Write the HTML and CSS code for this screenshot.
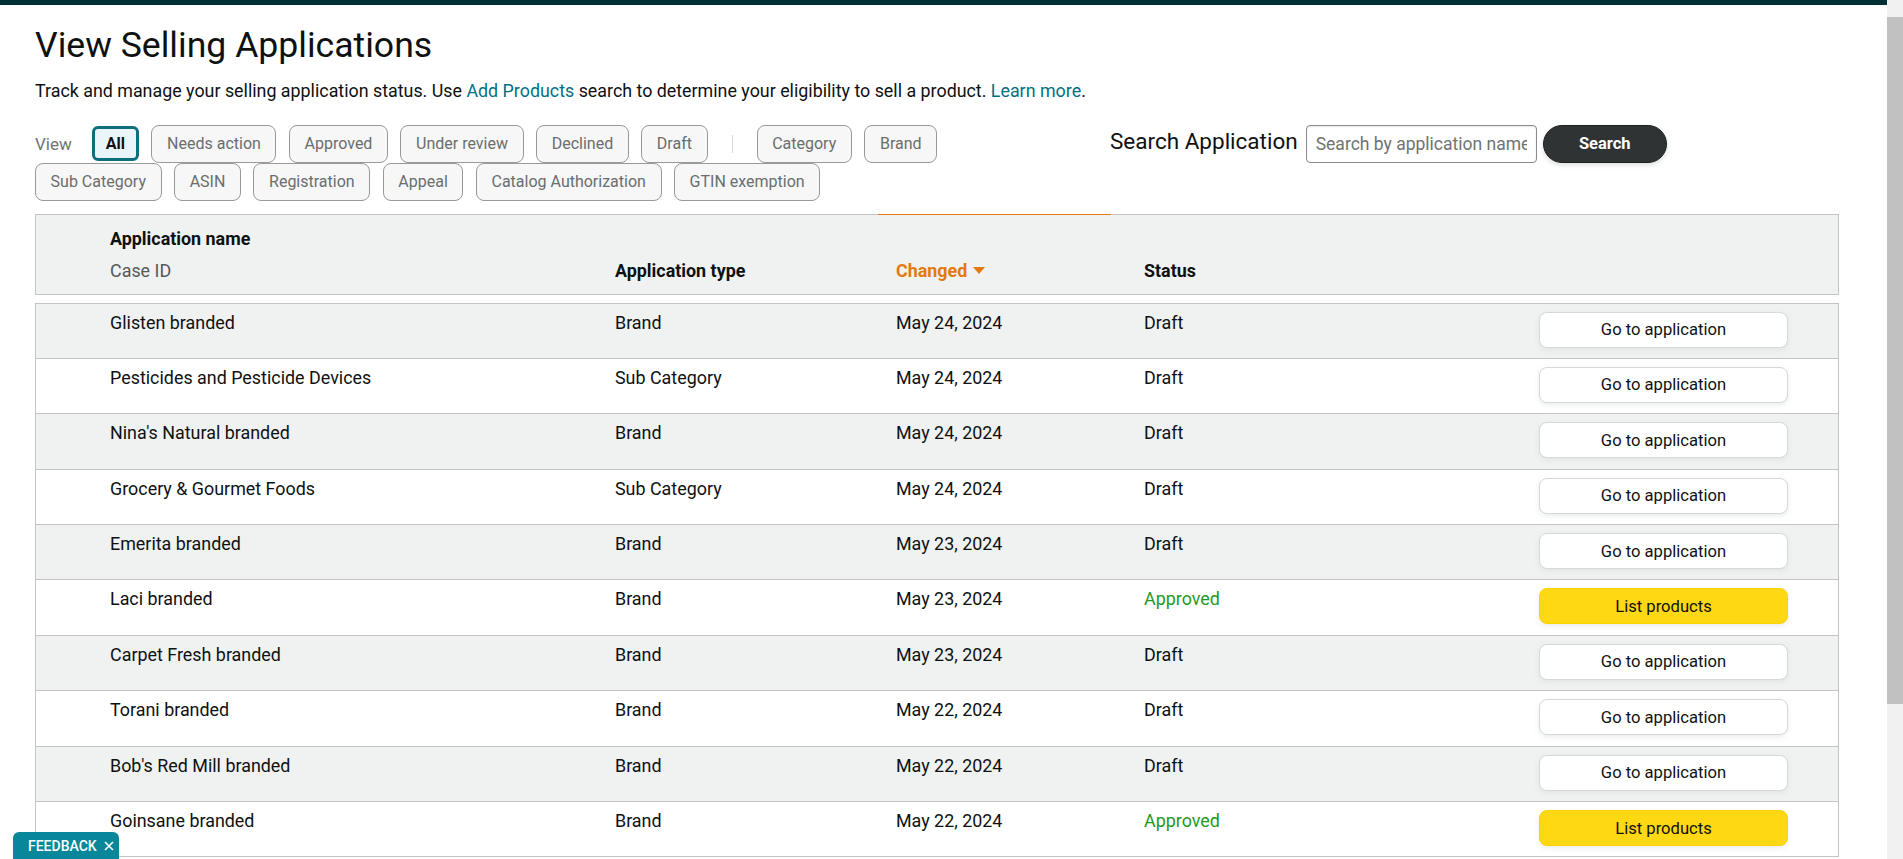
FILE: index.html
```html
<!DOCTYPE html>
<html>
<head>
    <meta charset="utf-8">
    <title>View Selling Applications</title>
    <meta name="viewport" content="width=device-width, initial-scale=1">
    <link rel="stylesheet" href="styles.css">
</head>
<body>
<div class="topbar"></div>

<div class="page">
    <h1 class="page-title">View Selling Applications</h1>
    <p class="page-intro">Track and manage your selling application status. Use <a href="#">Add Products</a> search to determine your eligibility to sell a product. <a href="#">Learn more</a>.</p>

    <div class="toolbar">
        <div class="filters">
            <span class="filters-label">View</span>
            <button class="chip chip-active">All</button>
            <button class="chip">Needs action</button>
            <button class="chip">Approved</button>
            <button class="chip">Under review</button>
            <button class="chip">Declined</button>
            <button class="chip">Draft</button>
            <span class="filters-divider"></span>
            <button class="chip">Category</button>
            <button class="chip">Brand</button>
            <button class="chip">Sub Category</button>
            <button class="chip">ASIN</button>
            <button class="chip">Registration</button>
            <button class="chip">Appeal</button>
            <button class="chip">Catalog Authorization</button>
            <button class="chip">GTIN exemption</button>
        </div>

        <div class="search">
            <label class="search-label" for="search-input">Search Application</label>
            <input class="search-input" id="search-input" type="text" placeholder="Search by application name">
            <button class="search-btn">Search</button>
        </div>
    </div>

    <div class="app-table">
        <div class="table-head">
            <div class="cell"></div>
            <div class="cell head-name">
                <span class="head-title">Application name</span>
                <span class="head-sub">Case ID</span>
            </div>
            <div class="cell head-title">Application type</div>
            <div class="cell head-title head-sorted">
                Changed
                <svg class="sort-caret" width="12" height="7" viewBox="0 0 12 7"><path d="M0 0h12L6 7z" fill="#e47911"/></svg>
            </div>
            <div class="cell cell-status head-title">Status</div>
            <div class="cell"></div>
        </div>

        <div class="table-body">
            <div class="table-row">
                <div class="cell"></div>
                <div class="cell">Glisten branded</div>
                <div class="cell">Brand</div>
                <div class="cell">May 24, 2024</div>
                <div class="cell cell-status">Draft</div>
                <div class="cell-action"><button class="btn">Go to application</button></div>
            </div>
            <div class="table-row">
                <div class="cell"></div>
                <div class="cell">Pesticides and Pesticide Devices</div>
                <div class="cell">Sub Category</div>
                <div class="cell">May 24, 2024</div>
                <div class="cell cell-status">Draft</div>
                <div class="cell-action"><button class="btn">Go to application</button></div>
            </div>
            <div class="table-row">
                <div class="cell"></div>
                <div class="cell">Nina's Natural branded</div>
                <div class="cell">Brand</div>
                <div class="cell">May 24, 2024</div>
                <div class="cell cell-status">Draft</div>
                <div class="cell-action"><button class="btn">Go to application</button></div>
            </div>
            <div class="table-row">
                <div class="cell"></div>
                <div class="cell">Grocery &amp; Gourmet Foods</div>
                <div class="cell">Sub Category</div>
                <div class="cell">May 24, 2024</div>
                <div class="cell cell-status">Draft</div>
                <div class="cell-action"><button class="btn">Go to application</button></div>
            </div>
            <div class="table-row">
                <div class="cell"></div>
                <div class="cell">Emerita branded</div>
                <div class="cell">Brand</div>
                <div class="cell">May 23, 2024</div>
                <div class="cell cell-status">Draft</div>
                <div class="cell-action"><button class="btn">Go to application</button></div>
            </div>
            <div class="table-row">
                <div class="cell"></div>
                <div class="cell">Laci branded</div>
                <div class="cell">Brand</div>
                <div class="cell">May 23, 2024</div>
                <div class="cell cell-status status-approved">Approved</div>
                <div class="cell-action"><button class="btn btn-primary">List products</button></div>
            </div>
            <div class="table-row">
                <div class="cell"></div>
                <div class="cell">Carpet Fresh branded</div>
                <div class="cell">Brand</div>
                <div class="cell">May 23, 2024</div>
                <div class="cell cell-status">Draft</div>
                <div class="cell-action"><button class="btn">Go to application</button></div>
            </div>
            <div class="table-row">
                <div class="cell"></div>
                <div class="cell">Torani branded</div>
                <div class="cell">Brand</div>
                <div class="cell">May 22, 2024</div>
                <div class="cell cell-status">Draft</div>
                <div class="cell-action"><button class="btn">Go to application</button></div>
            </div>
            <div class="table-row">
                <div class="cell"></div>
                <div class="cell">Bob's Red Mill branded</div>
                <div class="cell">Brand</div>
                <div class="cell">May 22, 2024</div>
                <div class="cell cell-status">Draft</div>
                <div class="cell-action"><button class="btn">Go to application</button></div>
            </div>
            <div class="table-row">
                <div class="cell"></div>
                <div class="cell">Goinsane branded</div>
                <div class="cell">Brand</div>
                <div class="cell">May 22, 2024</div>
                <div class="cell cell-status status-approved">Approved</div>
                <div class="cell-action"><button class="btn btn-primary">List products</button></div>
            </div>
        </div>
    </div>
</div>

<a class="feedback-tab" href="#">FEEDBACK
    <svg width="10" height="10" viewBox="0 0 10 10"><path d="M1 1l8 8M9 1l-8 8" stroke="#fff" stroke-width="1.6"/></svg>
</a>

<!-- window scrollbar -->
<div class="scrollbar"><div class="scrollbar-thumb"></div></div>
</body>
</html>
```

FILE: styles.css
```css
body {
    margin: 0;
    font-family: Roboto, "Liberation Sans", sans-serif;
    color: #0f1111;
    background: #fff;
}

a {
    color: #007185;
    text-decoration: none;
}

button, input {
    font-family: inherit;
}

.topbar {
    height: 5px;
    background: #002f36;
}

.page {
    padding: 0 0 40px 35px;
}

.page-title {
    margin: 18.5px 0 0;
    font-size: 35.6px;
    line-height: 42px;
    font-weight: 400;
}

.page-intro {
    margin: 13.5px 0 0;
    font-size: 17.85px;
    line-height: 24px;
}

/* filters + search */
.toolbar {
    display: flex;
    align-items: flex-start;
    margin-top: 21.5px;
}

.filters {
    display: flex;
    flex-wrap: wrap;
    align-items: center;
    column-gap: 12.5px;
    width: 1000px;
}

.filters-label {
    margin-right: 7.5px;
    font-size: 17px;
    color: #6f7373;
}

.filters-divider {
    width: 1px;
    height: 18px;
    margin: 0 11.5px;
    background: #d5d9d9;
}

.chip {
    height: 38px;
    padding: 0 14.6px;
    border: 1px solid #979a9a;
    border-radius: 8px;
    background: #f7f7f7;
    color: #6a6e6e;
    font-size: 16px;
    white-space: nowrap;
}

.chip-active {
    height: 35px;
    padding: 0 11px;
    border: 3px solid #0e6f7c;
    border-radius: 6px;
    background: #eaf5fa;
    color: #0f1111;
    font-weight: 700;
}

.search {
    display: flex;
    align-items: center;
    height: 38px;
    margin-left: 75px;
}

.search-label {
    margin: 0 8px 5px 0;
    font-size: 22.5px;
}

.search-input {
    box-sizing: border-box;
    width: 231px;
    height: 38px;
    padding: 0 9px;
    border: 1px solid #888c8c;
    border-radius: 4px;
    font-size: 17.5px;
    color: #0f1111;
    box-shadow: 0 1px 2px rgba(15, 17, 17, 0.1) inset;
}

.search-input::placeholder {
    color: #6f7373;
}

.search-btn {
    width: 124px;
    height: 38px;
    margin-left: 6px;
    border: 1px solid #1f2222;
    border-radius: 19px;
    background: #303333;
    color: #fff;
    font-size: 16.5px;
    font-weight: 700;
    box-shadow: 0 2px 5px rgba(15, 17, 17, 0.15);
}

/* table */
.app-table {
    width: 1804px;
    margin-top: 13px;
    font-size: 17.9px;
}

.table-head,
.table-row {
    display: grid;
    grid-template-columns: 56px 505px 281px 233px 1fr 249px;
    padding-right: 50px;
}

.table-head {
    border: 1px solid #c4c4c4;
    background: #f0f1f1;
    padding-top: 8px;
    padding-bottom: 7px;
    line-height: 32px;
}

.table-head .cell {
    display: flex;
    align-items: flex-end;
}

.cell {
    padding-left: 18px;
}

.cell-status {
    padding-left: 33px;
}

.table-head .head-name {
    flex-direction: column;
    align-items: flex-start;
}

.head-title {
    font-weight: 700;
}

.head-sub {
    color: #565959;
    font-weight: 400;
}

.head-sorted {
    color: #e47911;
    position: relative;
}

.head-sorted::before {
    content: "";
    position: absolute;
    left: 0;
    right: 0;
    top: -9px;
    border-top: 1px solid #e47911;
}

.sort-caret {
    margin: 0 0 13px 6px;
}

.table-body {
    margin-top: 8px;
    border: 1px solid #c4c4c4;
    border-bottom: 0;
}

.table-row {
    box-sizing: border-box;
    height: 55.4px;
    padding-top: 8px;
    border-bottom: 1px solid #c4c4c4;
    line-height: 21px;
}

.table-row:nth-child(odd) {
    background: #f0f1f1;
}

.status-approved {
    color: #1e9b1e;
}

.btn {
    box-sizing: border-box;
    width: 249px;
    height: 36px;
    border: 1px solid #d5d9d9;
    border-radius: 8px;
    background: #fff;
    color: #0f1111;
    font-size: 16.6px;
    box-shadow: 0 2px 5px rgba(213, 217, 217, 0.5);
}

.btn-primary {
    background: #ffd814;
    border-color: #fcd200;
}

.feedback-tab {
    position: fixed;
    left: 13px;
    bottom: 0;
    display: flex;
    align-items: center;
    gap: 7px;
    width: 106px;
    height: 27px;
    box-sizing: border-box;
    padding: 1px 0 0 15px;
    border-radius: 6px 6px 0 0;
    background: #078799;
    color: #fff;
    font-size: 14px;
    font-weight: 500;
}

.scrollbar {
    position: fixed;
    top: 0;
    right: 0;
    width: 16px;
    height: 100vh;
    background: #f1f1f1;
}

.scrollbar-thumb {
    margin-top: 17px;
    height: 687px;
    background: #c1c1c1;
}
```
